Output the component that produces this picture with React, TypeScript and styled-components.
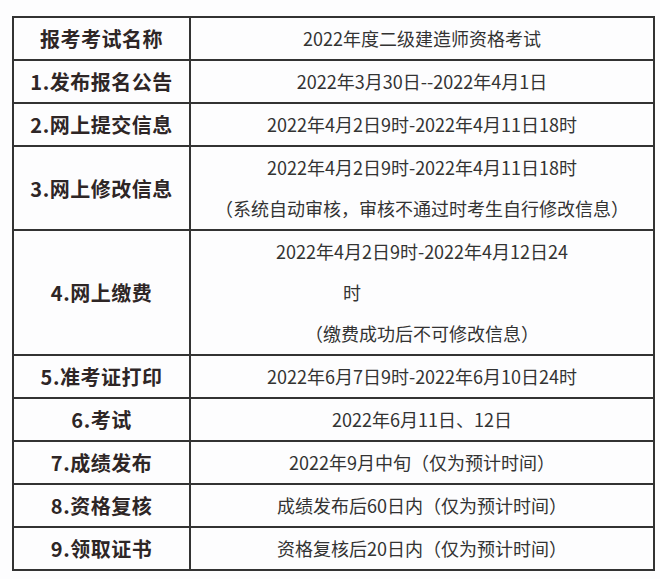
import styled, { createGlobalStyle } from "styled-components";

const GlobalStyle = createGlobalStyle`
  html, body {
    margin: 0;
    padding: 0;
    background: #ffffff;
  }
  body {
    font-family: "Noto Sans CJK SC", "Noto Sans", sans-serif;
  }
`;

const Page = styled.div`
  width: 660px;
  height: 579px;
  padding: 16px 0 0 12px;
  box-sizing: border-box;
  background: #fdfdfe;
`;

const Schedule = styled.table`
  width: 643px;
  border-collapse: collapse;
  table-layout: fixed;
`;

const Label = styled.td`
  width: 175px;
  border: 2px solid #333;
  padding: 0;
  text-align: center;
  vertical-align: middle;
  font-size: 20px;
  font-weight: 700;
  color: #2e2626;
  letter-spacing: 0.5px;
`;

const Value = styled.td`
  border: 2px solid #333;
  padding: 0;
  text-align: center;
  vertical-align: middle;
  font-size: 18px;
  font-weight: 400;
  color: #333;
`;

const Line = styled.div<{ $indent?: number }>`
  height: 41px;
  line-height: 41px;
  white-space: nowrap;
  text-align: ${(p) => (p.$indent ? "left" : "center")};
  padding-left: ${(p) => p.$indent ?? 0}px;
`;

type Step = {
  label: string;
  lines: { text: string; indent?: number }[];
};

const steps: Step[] = [
  { label: "报考考试名称", lines: [{ text: "2022年度二级建造师资格考试" }] },
  { label: "1.发布报名公告", lines: [{ text: "2022年3月30日--2022年4月1日" }] },
  { label: "2.网上提交信息", lines: [{ text: "2022年4月2日9时-2022年4月11日18时" }] },
  {
    label: "3.网上修改信息",
    lines: [
      { text: "2022年4月2日9时-2022年4月11日18时" },
      { text: "（系统自动审核，审核不通过时考生自行修改信息）" },
    ],
  },
  {
    label: "4.网上缴费",
    lines: [
      { text: "2022年4月2日9时-2022年4月12日24" },
      { text: "时", indent: 152 },
      { text: "（缴费成功后不可修改信息）" },
    ],
  },
  { label: "5.准考证打印", lines: [{ text: "2022年6月7日9时-2022年6月10日24时" }] },
  { label: "6.考试", lines: [{ text: "2022年6月11日、12日" }] },
  { label: "7.成绩发布", lines: [{ text: "2022年9月中旬（仅为预计时间）" }] },
  { label: "8.资格复核", lines: [{ text: "成绩发布后60日内（仅为预计时间）" }] },
  { label: "9.领取证书", lines: [{ text: "资格复核后20日内（仅为预计时间）" }] },
];

export default function App() {
  return (
    <>
      <GlobalStyle />
      <Page>
        <Schedule>
          <tbody>
            {steps.map((s) => (
              <tr key={s.label}>
                <Label>{s.label}</Label>
                <Value>
                  {s.lines.map((l, i) => (
                    <Line key={i} $indent={l.indent}>
                      {l.text}
                    </Line>
                  ))}
                </Value>
              </tr>
            ))}
          </tbody>
        </Schedule>
      </Page>
    </>
  );
}
